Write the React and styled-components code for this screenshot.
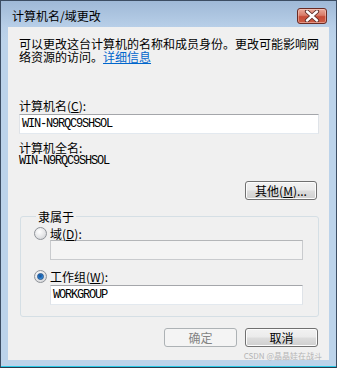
import React from "react";
import styled, { createGlobalStyle } from "styled-components";

const Global = createGlobalStyle`
  html, body { margin: 0; padding: 0; background: #ffffff; }
  body { font-family: "Noto Sans CJK SC", "Liberation Sans", sans-serif; font-size: 12px; }
  * { box-sizing: border-box; }
`;

const cjk = `"Noto Sans CJK SC", "Liberation Sans", sans-serif`;
const mono = `"Liberation Mono", "DejaVu Sans Mono", monospace`;

const Window = styled.div`
  width: 337px;
  height: 368px;
  display: flex;
  flex-direction: column;
  border: 1px solid #3c4d63;
  border-bottom-color: #2a3a4c;
  background: linear-gradient(#9fb9d7 0px, #b8cfe8 26px, #bcd3ea 40px, #bcd3ea 100%);
  box-shadow: inset 0 -1px 0 #29c9e6;
  font-family: ${cjk};
  font-size: 12px;
  color: #000;
`;

const TitleBar = styled.div`
  height: 27px;
  display: flex;
  align-items: flex-start;
  justify-content: space-between;
  padding: 0 9px 0 11px;
`;

const Title = styled.div`
  margin-top: 7px;
  font-size: 12px;
  line-height: 16px;
  color: #000;
`;

const CloseButton = styled.div`
  margin-top: 7px;
  width: 30px;
  height: 16px;
  border: 1px solid #6a2b24;
  border-radius: 3px;
  background: linear-gradient(#e9aa9b 0%, #d87b68 45%, #c64b36 55%, #cc5c45 100%);
  box-shadow: inset 0 0 0 1px rgba(255, 220, 210, 0.45);
  display: flex;
  align-items: center;
  justify-content: center;
`;

const Content = styled.div`
  flex: 1;
  margin: 0 7px 7px 7px;
  background: #f0f0f0;
  display: flex;
  flex-direction: column;
  padding: 10px 11px 0 11px;
`;

const Desc = styled.div`
  line-height: 13px;
  white-space: nowrap;
`;

const Link = styled.span`
  color: #0066cc;
  text-decoration: underline;
`;

const Label = styled.div`
  line-height: 13px;
  margin-top: ${(p) => p.$mt || 0}px;
  white-space: nowrap;
`;

const MonoText = styled.div`
  font-family: ${mono};
  font-size: 12px;
  letter-spacing: -1.2px;
  line-height: 13px;
  margin-top: ${(p) => p.$mt || 0}px;
  color: #000;
`;

const TextBox = styled.div`
  height: 20px;
  width: ${(p) => p.$w}px;
  margin-top: ${(p) => p.$mt || 0}px;
  margin-left: ${(p) => p.$ml || 0}px;
  border: 1px solid ${(p) => (p.$disabled ? "#c9cbce" : "#abadb3")};
  border-top-color: ${(p) => (p.$disabled ? "#b4b6b9" : "#a4a6aa")};
  border-left-color: ${(p) => (p.$disabled ? "#c9cbce" : "#dfe3e8")};
  border-right-color: ${(p) => (p.$disabled ? "#c9cbce" : "#dfe3e8")};
  border-bottom-color: ${(p) => (p.$disabled ? "#c9cbce" : "#e3e9ef")};
  background: ${(p) => (p.$disabled ? "#f4f4f4" : "#ffffff")};
  display: flex;
  align-items: center;
  padding-left: 2px;
  font-family: ${mono};
  font-size: 12px;
  letter-spacing: -1.2px;
`;

const ButtonRow = styled.div`
  display: flex;
  justify-content: flex-end;
  gap: 8px;
  margin-top: ${(p) => p.$mt || 0}px;
  padding-right: ${(p) => p.$pr || 0}px;
`;

const Button = styled.div`
  width: ${(p) => p.$w || 73}px;
  height: 19px;
  border: 1px solid ${(p) => (p.$disabled ? "#adb2b5" : "#707070")};
  border-radius: 3px;
  background: ${(p) =>
    p.$disabled
      ? "#f4f4f4"
      : "linear-gradient(#f2f2f2 0%, #ebebeb 48%, #dddddd 52%, #cfcfcf 100%)"};
  box-shadow: ${(p) => (p.$disabled ? "none" : "inset 0 0 0 1px #fcfcfc")};
  color: ${(p) => (p.$disabled ? "#838383" : "#000")};
  display: flex;
  align-items: center;
  justify-content: center;
  font-size: 12px;
  line-height: 13px;
  white-space: nowrap;
`;

const Group = styled.fieldset`
  margin: 10px 0 0 1px;
  width: 299px;
  padding: 0 0 11px 13px;
  border: 1px solid #d5dfe5;
  border-radius: 3px;
  min-inline-size: 0;
`;

const Legend = styled.legend`
  padding: 0 2px;
  margin-left: 2px;
  line-height: 13px;
  font-size: 12px;
`;

const RadioRow = styled.div`
  display: flex;
  align-items: center;
  gap: 3px;
  height: 14px;
  margin-top: ${(p) => p.$mt || 0}px;
`;

const RadioCircle = styled.div`
  width: 13px;
  height: 13px;
  border-radius: 50%;
  border: 1px solid #8f9399;
  background: radial-gradient(circle at 40% 35%, #ffffff 0%, #e4e5e7 55%, #c8cacd 100%);
  display: flex;
  align-items: center;
  justify-content: center;
`;

const RadioDot = styled.div`
  width: 7px;
  height: 7px;
  border-radius: 50%;
  background: radial-gradient(circle at 45% 40%, #1f4f87 0%, #1a66b8 35%, #3e9be5 75%, #8fcbf5 100%);
  border: 1px solid #24528a;
`;

const Watermark = styled.div`
  margin-top: 4px;
  align-self: flex-end;
  margin-right: -4px;
  font-size: 8px;
  line-height: 9px;
  color: #b4b4b4;
  white-space: nowrap;
`;

const Acc = ({ ch }) => (
  <>
    (<u>{ch}</u>)
  </>
);

export default function App() {
  return (
    <>
      <Global />
      <Window>
        <TitleBar>
          <Title>计算机名/域更改</Title>
          <CloseButton>
            <svg width="16" height="12" viewBox="0 0 16 12">
              <path
                d="M3 1.5 L13 10.5 M13 1.5 L3 10.5"
                stroke="#5a2a26"
                strokeWidth="4.2"
                strokeLinecap="round"
              />
              <path
                d="M3 1.5 L13 10.5 M13 1.5 L3 10.5"
                stroke="#ffffff"
                strokeWidth="2.4"
                strokeLinecap="round"
              />
            </svg>
          </CloseButton>
        </TitleBar>
        <Content>
          <Desc>
            可以更改这台计算机的名称和成员身份。更改可能影响网
            <br />
            络资源的访问。<Link>详细信息</Link>
          </Desc>
          <Label $mt={36}>
            计算机名<Acc ch="C" />:
          </Label>
          <TextBox $w={300} $mt={2}>WIN-N9RQC9SHSOL</TextBox>
          <Label $mt={7}>计算机全名:</Label>
          <MonoText $mt={1}>WIN-N9RQC9SHSOL</MonoText>
          <ButtonRow $mt={13} $pr={1}>
            <Button $w={72}>
              其他<Acc ch="M" />...
            </Button>
          </ButtonRow>
          <Group>
            <Legend>隶属于</Legend>
            <RadioRow $mt={3}>
              <RadioCircle />
              <span>
                域<Acc ch="D" />:
              </span>
            </RadioRow>
            <TextBox $w={253} $ml={16} $disabled />
            <RadioRow $mt={9}>
              <RadioCircle>
                <RadioDot />
              </RadioCircle>
              <span>
                工作组<Acc ch="W" />:
              </span>
            </RadioRow>
            <TextBox $w={253} $ml={16} $mt={2}>
              WORKGROUP
            </TextBox>
          </Group>
          <ButtonRow $mt={11}>
            <Button $disabled>确定</Button>
            <Button>取消</Button>
          </ButtonRow>
          <Watermark>CSDN @晶晶娃在战斗</Watermark>
        </Content>
      </Window>
    </>
  );
}
